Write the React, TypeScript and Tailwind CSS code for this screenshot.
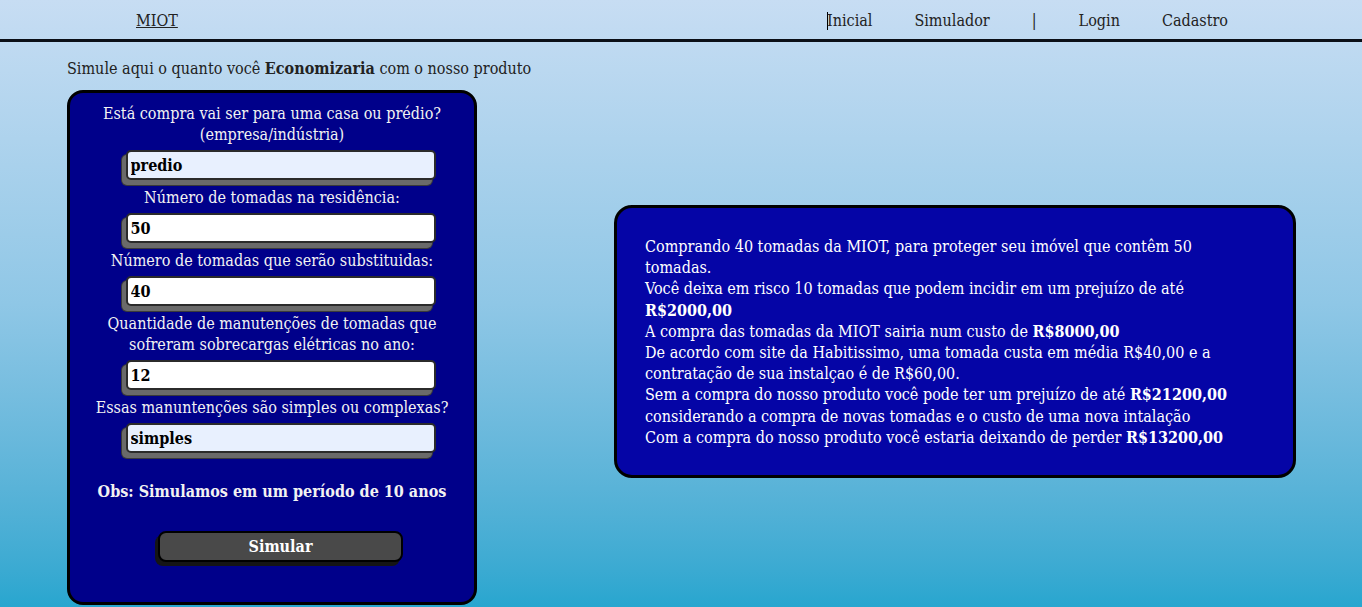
import React from "react";

const fields = [
  { label: ["Está compra vai ser para uma casa ou prédio?", "(empresa/indústria)"], value: "predio", filled: true },
  { label: ["Número de tomadas na residência:"], value: "50", filled: false },
  { label: ["Número de tomadas que serão substituidas:"], value: "40", filled: false },
  {
    label: ["Quantidade de manutenções de tomadas que", "sofreram sobrecargas elétricas no ano:"],
    value: "12",
    filled: false,
  },
  { label: ["Essas manuntenções são simples ou complexas?"], value: "simples", filled: true },
];

const navItems = ["Inicial", "Simulador", "|", "Login", "Cadastro"];

const Field: React.FC<{ label: string[]; value: string; filled: boolean }> = ({ label, value, filled }) => (
  <>
    <label className="block text-center leading-[21px]">
      {label.map((l, i) => (
        <span key={i} className="block">
          {l}
        </span>
      ))}
    </label>
    <input
      readOnly
      value={value}
      className={`mt-[5px] mb-[7px] ml-[17px] h-[30px] w-[310px] rounded-[5px] border-2 border-[#2b2b2b] px-[3px] font-bold text-black outline-none shadow-[-4px_5px_0_#6a6a6a,-4px_5px_0_1px_#3a3a3a] ${
        filled ? "bg-[#e8f0fe]" : "bg-white"
      }`}
    />
  </>
);

export default function App() {
  return (
    <div className="min-h-screen w-full bg-linear-to-b from-[#c7ddf3] via-[#8fc7e6] to-[#27a6cf] font-['DejaVu_Serif',serif] font-stretch-condensed text-[16px] text-[#222]">
      <header className="flex h-[42px] items-center justify-between border-b-[3px] border-[#0b0f17] pt-[3px] pl-[136px] pr-[134px]">
        <a className="underline">MIOT</a>
        <nav className="flex items-center gap-[42px]">
          {navItems.map((item, i) => (
            <span key={item} className="flex items-center text-[#222]">
              {i === 0 && <span className="mr-[-1px] inline-block h-[18px] w-px bg-black" />}
              {item}
            </span>
          ))}
        </nav>
      </header>

      <p className="ml-[67px] mt-[16px] leading-[21px]">
        Simule aqui o quanto você <b>Economizaria</b> com o nosso produto
      </p>

      <main className="flex items-start pl-[67px]">
        <form className="mt-[11px] flex w-[410px] flex-col items-center rounded-[16px] border-[3px] border-black bg-[#00008a] pt-[10px] pb-[40px] text-[#f2f2f2]">
          {fields.map((f, i) => (
            <Field key={i} {...f} />
          ))}
          <p className="mt-[21px] font-bold leading-[21px]">Obs: Simulamos em um período de 10 anos</p>
          <button
            type="button"
            className="mt-[29px] ml-[17px] h-[31px] w-[245px] rounded-[8px] border-2 border-black bg-[#494949] font-bold text-white shadow-[-3px_4px_0_#151515]"
          >
            Simular
          </button>
        </form>

        <section className="ml-[137px] mt-[126px] w-[682px] rounded-[18px] border-[3px] border-black bg-[#0505a6] pt-[28px] pr-[48px] pb-[27px] pl-[28px] leading-[21.2px] text-white">
          <p>Comprando 40 tomadas da MIOT, para proteger seu imóvel que contêm 50 tomadas.</p>
          <p>
            Você deixa em risco 10 tomadas que podem incidir em um prejuízo de até <b>R$2000,00</b>
          </p>
          <p>
            A compra das tomadas da MIOT sairia num custo de <b>R$8000,00</b>
          </p>
          <p>
            De acordo com site da Habitissimo, uma tomada custa em média R$40,00 e a contratação de sua instalçao é de
            R$60,00.
          </p>
          <p>
            Sem a compra do nosso produto você pode ter um prejuízo de até <b>R$21200,00</b>
          </p>
          <p>considerando a compra de novas tomadas e o custo de uma nova intalação</p>
          <p>
            Com a compra do nosso produto você estaria deixando de perder <b>R$13200,00</b>
          </p>
        </section>
      </main>
    </div>
  );
}
